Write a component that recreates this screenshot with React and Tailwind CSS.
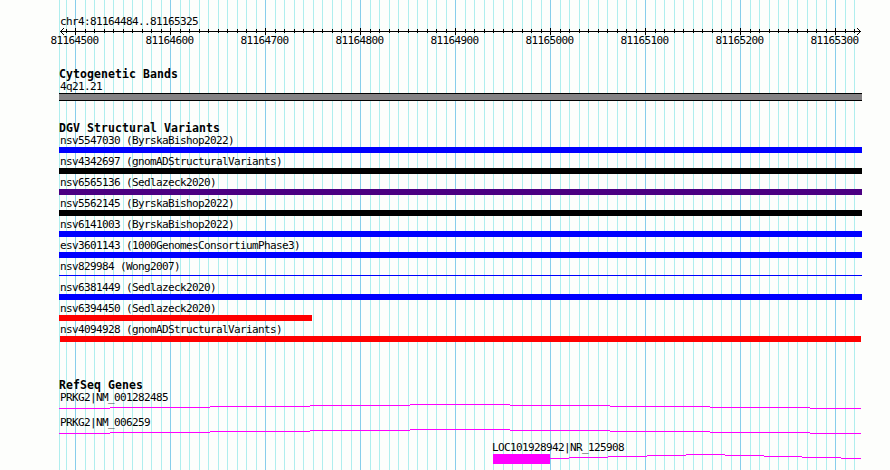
import React from 'react';

const START = 59;
const MAJOR = [75, 170, 265, 360, 455, 550, 645, 740, 835];
const OFFSETS = [10, 19, 29, 38, 48, 57, 67, 76, 86];
const MINOR = [66, ...MAJOR.flatMap((x) => OFFSETS.map((o) => x + o))].filter((x) => x < 860);

const VARIANTS = [
  { label: 'nsv5547030 (ByrskaBishop2022)', bar: 'bg-[#0000ff]' },
  { label: 'nsv4342697 (gnomADStructuralVariants)', bar: 'bg-black' },
  { label: 'nsv6565136 (Sedlazeck2020)', bar: 'bg-[#4b0082]' },
  { label: 'nsv5562145 (ByrskaBishop2022)', bar: 'bg-black' },
  { label: 'nsv6141003 (ByrskaBishop2022)', bar: 'bg-[#0000ff]' },
  { label: 'esv3601143 (1000GenomesConsortiumPhase3)', bar: 'bg-[#0000ff]' },
  { label: 'nsv829984 (Wong2007)', thin: true },
  { label: 'nsv6381449 (Sedlazeck2020)', bar: 'bg-[#0000ff]' },
  { label: 'nsv6394450 (Sedlazeck2020)', bar: 'bg-[#ff0000] mr-[550px]' },
  { label: 'nsv4094928 (gnomADStructuralVariants)', bar: 'bg-[#ff0000] ml-px mr-px' },
];

// [from, to, y] segments of the intron lines
const PRKG2 = [
  [59, 110, 4], [110, 210, 3], [210, 310, 2], [310, 410, 1], [410, 510, 0],
  [510, 610, 1], [610, 710, 2], [710, 810, 3], [810, 861, 4],
];
const LOC = [
  [550, 569, 4], [569, 608, 3], [608, 647, 2], [647, 686, 1], [686, 725, 0],
  [725, 764, 1], [764, 802, 2], [802, 841, 3], [841, 861, 4],
];

function Label({ children, className = '' }) {
  return (
    <div className={`h-3 pl-px text-[11px] leading-[14px] tracking-[-0.62px] whitespace-pre ${className}`}>
      {children}
    </div>
  );
}

function Heading({ children }) {
  return (
    <h2 className="h-3 text-[11.5px] leading-3 font-bold tracking-[0.08px] whitespace-pre">{children}</h2>
  );
}

function Gridlines() {
  return (
    <svg className="absolute inset-0" width="890" height="470" shapeRendering="crispEdges">
      {[START, ...MINOR].map((x) => (
        <rect key={x} x={x} y="0" width="1" height="470" fill="#afeeee" />
      ))}
      {MAJOR.map((x) => (
        <rect key={x} x={x} y="0" width="1" height="470" fill="#87ceeb" />
      ))}
    </svg>
  );
}

function Ruler() {
  return (
    <svg className="block h-[9px] w-[803px]" viewBox="59 27 803 9" shapeRendering="crispEdges">
      <rect x="60" y="31" width="801" height="1" />
      {MINOR.map((x) => (
        <rect key={x} x={x} y="29" width="1" height="4" />
      ))}
      {MAJOR.map((x) => (
        <rect key={x} x={x} y="28" width="1" height="7" />
      ))}
      {[1, 2, 3].map((i) => (
        <g key={i}>
          <rect x={60 + i} y={31 - i} width="1" height="1" />
          <rect x={60 + i} y={31 + i} width="1" height="1" />
          <rect x={860 - i} y={31 - i} width="1" height="1" />
          <rect x={860 - i} y={31 + i} width="1" height="1" />
        </g>
      ))}
    </svg>
  );
}

function Intron({ segments }) {
  return (
    <svg className="block h-[5px] w-[803px]" viewBox="59 0 803 5" shapeRendering="crispEdges">
      {segments.map(([from, to, y]) => (
        <rect key={from} x={from} y={y} width={to - from} height="1" fill="#ff00ff" />
      ))}
    </svg>
  );
}

export default function App() {
  return (
    <div className="relative h-[470px] w-[890px] overflow-hidden bg-[#fdfefc] font-['DejaVu_Sans_Mono',monospace] text-black">
      <Gridlines />
      <main className="relative ml-[59px] w-[803px] pt-[15px]">
        <Label>chr4:81164484..81165325</Label>
        <Ruler />
        <div className="-mt-px -ml-8 flex h-[13px] text-[11px] leading-3 tracking-[-0.62px]">
          {MAJOR.map((x, i) => (
            <span key={x} className="w-[95px] shrink-0 text-center">{81164500 + i * 100}</span>
          ))}
        </div>

        <section className="mt-5">
          <Heading>Cytogenetic Bands</Heading>
          <Label>4q21.21</Label>
          <div className="mt-px h-2 border-y border-black bg-[#848284]" />
        </section>

        <section className="mt-[21px]">
          <Heading>DGV Structural Variants</Heading>
          {VARIANTS.map((v) => (
            <div key={v.label} className="h-[21px]">
              <Label>{v.label}</Label>
              {v.thin ? (
                <div className="mt-[3px] h-px bg-[#0000ff]" />
              ) : (
                <div className={`mt-px h-1.5 ${v.bar}`} />
              )}
            </div>
          ))}
        </section>

        <section className="mt-[35px]">
          <Heading>RefSeq Genes</Heading>
          <div className="h-[25px]">
            <Label className="mb-px">PRKG2|NM_001282485</Label>
            <Intron segments={PRKG2} />
          </div>
          <div className="h-[25px]">
            <Label className="mb-px">PRKG2|NM_006259</Label>
            <Intron segments={PRKG2} />
          </div>
          <Label className="mb-px ml-[432px]">LOC101928942|NR_125908</Label>
          <div className="flex">
            <div className="ml-[434px] h-2.5 w-[57px] shrink-0 bg-[#ff00ff]" />
            <div className="-ml-[491px] shrink-0">
              <Intron segments={LOC} />
            </div>
          </div>
        </section>
      </main>
    </div>
  );
}
